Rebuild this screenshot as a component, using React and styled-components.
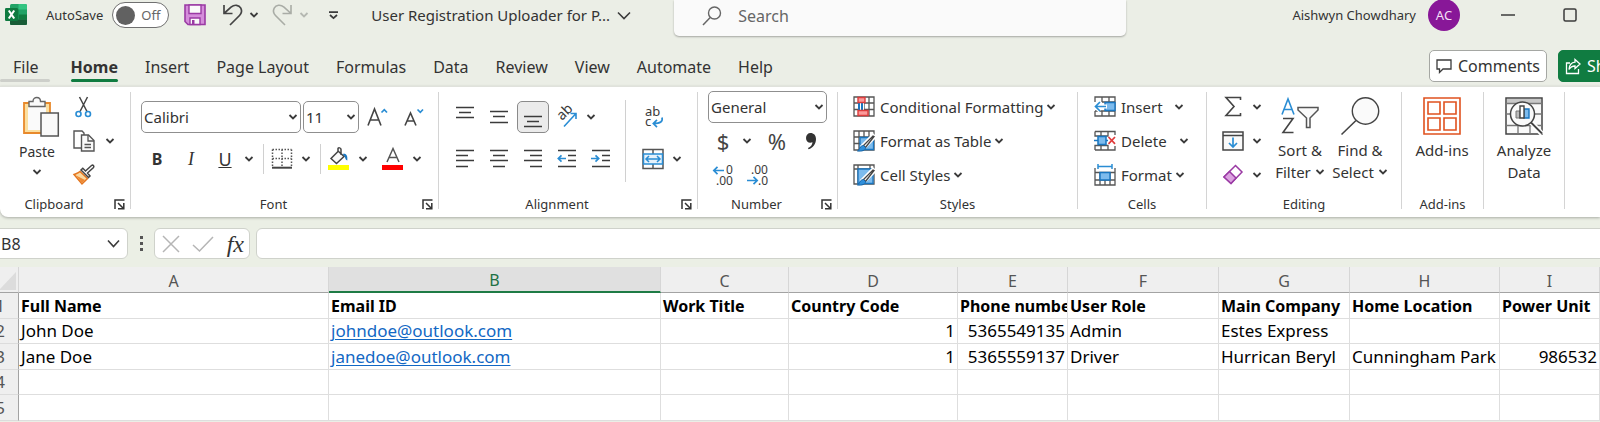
import React from "react";
import styled, { createGlobalStyle, css } from "styled-components";

const UI = '"Noto Sans", "Open Sans", sans-serif';
const INK = "#3b3b3b";
const BLUE = "#2a8dd4";
const GREEN = "#107c41";

const GlobalStyle = createGlobalStyle`
  *, *::before, *::after { box-sizing: border-box; }
  body {
    margin: 0;
    background: #ebeee6;
    color: #333;
    font-family: ${UI};
    overflow: hidden;
  }
  button, input, select { font: inherit; color: inherit; margin: 0; }
  svg { overflow: visible; }
`;

const buttonReset = css`
  border: 0;
  padding: 0;
  background: transparent;
  white-space: nowrap;
  cursor: pointer;
`;

/* ---------- title bar ---------- */

const TitleBar = styled.header`
  display: flex;
  align-items: flex-start;
  height: 50px;
  padding: 0 23px 0 5px;
`;

const TitleItem = styled.div`
  display: flex;
  align-items: center;
  flex: none;
  height: 30px;
  margin-left: ${(p) => p.$gap || 0}px;
  font-size: 13px;
  white-space: nowrap;
`;

const TitleButton = styled.button`
  ${buttonReset}
  display: flex;
  align-items: center;
  flex: none;
  height: 30px;
  margin-left: ${(p) => p.$gap || 0}px;
  font-size: 15px;
`;

const Toggle = styled.button`
  ${buttonReset}
  display: flex;
  align-items: center;
  gap: 6px;
  width: 57px;
  height: 26px;
  margin-left: 9px;
  padding-left: 3px;
  border: 1px solid #707070;
  border-radius: 13px;
  background: #fff;
  color: #666;
  font-size: 13px;
  &::before {
    content: "";
    width: 19px;
    height: 19px;
    border-radius: 50%;
    background: #616161;
  }
`;

const SearchBox = styled.label`
  display: flex;
  align-items: center;
  flex: 0 1 452px;
  height: 36px;
  margin-left: 43px;
  padding: 0 26px 5px 28px;
  gap: 16px;
  border-radius: 0 0 5px 5px;
  background: #fafafa;
  box-shadow: 0 1px 2px rgba(0, 0, 0, 0.3);
`;

const SearchInput = styled.input`
  flex: 1;
  min-width: 0;
  border: 0;
  padding: 0;
  outline: 0;
  background: transparent;
  font-size: 16px;
  &::placeholder { color: #666; opacity: 1; }
`;

const Account = styled.div`
  display: flex;
  align-items: center;
  height: 30px;
  margin-left: auto;
  font-size: 13px;
  white-space: nowrap;
`;

const Avatar = styled.span`
  display: grid;
  place-items: center;
  width: 32px;
  height: 32px;
  margin: 0 41px 0 12px;
  border-radius: 50%;
  background: #881798;
  color: #f3dff6;
  font-size: 13px;
`;

/* ---------- tabs ---------- */

const TabBar = styled.div`
  display: flex;
  align-items: flex-start;
  height: 36px;
  overflow: hidden;
`;

const Tabs = styled.nav`
  display: flex;
  gap: 27px;
  padding-left: 13px;
`;

const Tab = styled.button`
  ${buttonReset}
  position: relative;
  height: 34px;
  color: #333;
  font-size: 16px;
  font-weight: ${(p) => (p.$active ? 700 : 400)};
  margin-right: ${(p) => (p.$hovered ? 5 : 0)}px;
  &::after {
    content: "";
    position: absolute;
    bottom: 2px;
    left: ${(p) => (p.$hovered ? -13 : 0)}px;
    right: ${(p) => (p.$hovered ? -11 : 0)}px;
    height: 3px;
    border-radius: 2px;
    background: ${(p) => (p.$active ? GREEN : p.$hovered ? "#cdcfca" : "transparent")};
  }
`;

const ActionButton = styled.button`
  ${buttonReset}
  display: flex;
  align-items: center;
  flex: none;
  gap: 6px;
  height: 32px;
  padding: 0 6px;
  border: 1px solid ${(p) => (p.$primary ? GREEN : "#a5a7a3")};
  border-radius: 5px;
  background: ${(p) => (p.$primary ? GREEN : "#fff")};
  color: ${(p) => (p.$primary ? "#fff" : "#333")};
  font-size: 16px;
`;

const Comments = styled(ActionButton)`
  margin-left: auto;
  margin-right: 11px;
`;

const Share = styled(ActionButton)`
  width: 100px;
  margin-right: -58px;
`;

/* ---------- ribbon ---------- */

const Ribbon = styled.section`
  position: relative;
  display: flex;
  height: 131px;
  padding: 5px 0 8px;
  border-top: 1px solid #e0e2dc;
  border-radius: 0 0 0 8px;
  background: #fff;
  box-shadow: 0 1px 3px rgba(0, 0, 0, 0.28);
`;

const GroupBox = styled.div`
  display: flex;
  flex-direction: column;
  flex: 0 0 ${(p) => p.$width}px;
  border-right: 1px solid #d4d4d4;
`;

const GroupBody = styled.div`
  display: flex;
  flex: 1;
  padding-left: ${(p) => p.$pad || 0}px;
`;

const GroupFooter = styled.div`
  display: flex;
  align-items: center;
  height: 12px;
  padding-top: 2px;
  font-size: 13px;
  line-height: 12px;
`;

const GroupLabel = styled.span`
  flex: 1;
  text-align: center;
`;

const Launcher = styled.button`
  ${buttonReset}
  display: flex;
  width: 22px;
  padding-left: 6px;
`;

const Stack = styled.div`
  display: flex;
  flex-direction: column;
  gap: ${(p) => (p.$two ? 12 : 4)}px;
  padding-top: ${(p) => (p.$two ? 10 : 0)}px;
`;

const Row = styled.div`
  display: flex;
  align-items: center;
  height: 30px;
  gap: ${(p) => p.$gap || 0}px;
  padding-left: ${(p) => p.$pad || 0}px;
`;

const Tool = styled.button`
  ${buttonReset}
  display: grid;
  place-items: center;
  flex: none;
  width: 34px;
  height: 30px;
  font-size: ${(p) => (p.$bold ? 16 : 18)}px;
  line-height: 30px;
  font-family: ${(p) => (p.$serif ? '"Liberation Serif", serif' : "inherit")};
  font-style: ${(p) => (p.$serif ? "italic" : "normal")};
  font-weight: ${(p) => (p.$bold ? 700 : 400)};
`;

const PressedTool = styled(Tool)`
  width: 32px;
  height: 32px;
  margin: 0 1px;
  border: 1px solid #8a8a8a;
  border-radius: 5px;
  background: #ebebeb;
`;

const ClipboardTool = styled(Tool)`
  width: 26px;
  margin: 0 6px 0 -3px;
`;

const NumberTool = styled(Tool)`
  font-size: 22px;
  color: #444;
`;

const ArrowButton = styled.button`
  ${buttonReset}
  display: grid;
  place-items: center;
  flex: none;
  width: 14px;
  height: 30px;
  margin-right: 2px;
`;

const Split = styled.div`
  display: flex;
  flex: none;
  margin-right: 4px;
`;

const Rule = styled.span`
  width: 1px;
  height: 30px;
  margin: 0 1px;
  background: #d0d0d0;
`;

const TallRule = styled.span`
  width: 1px;
  height: 82px;
  margin: 8px 10px 0 7px;
  background: #d0d0d0;
`;

const SelectBox = styled.span`
  display: flex;
  align-items: center;
  flex: none;
  width: ${(p) => p.$width}px;
  height: 32px;
  padding-right: 2px;
  border: 1px solid #8f8f8f;
  border-radius: 5px;
  background: #fff;
`;

const Select = styled.select`
  appearance: none;
  flex: 1;
  min-width: 0;
  height: 30px;
  border: 0;
  padding: 0 0 0 2px;
  outline: 0;
  background: transparent;
  color: #333;
  font-size: 15px;
`;

const BigButton = styled.button`
  ${buttonReset}
  display: flex;
  flex-direction: column;
  align-items: center;
  width: ${(p) => p.$width}px;
  padding-top: 5px;
  font-size: ${(p) => p.$size || 15}px;
  line-height: 22px;
  svg:first-child { margin-bottom: 4px; }
`;

const BigLine = styled.span`
  display: flex;
  align-items: center;
  gap: 4px;
  min-height: 18px;
  && svg { margin: 0; }
`;

const Command = styled.button`
  ${buttonReset}
  display: flex;
  align-items: center;
  height: 30px;
  gap: 3px;
  font-size: 15px;
`;

const CommandText = styled.span`
  min-width: ${(p) => p.$width || 0}px;
  margin-left: 2px;
  text-align: left;
`;

/* ---------- formula bar ---------- */

const FormulaBar = styled.div`
  display: flex;
  align-items: center;
  height: 50px;
  overflow: hidden;
  padding-top: 3px;
  background: #ebefe5;
`;

const BarBox = styled.div`
  display: flex;
  align-items: center;
  flex: none;
  height: 31px;
  border: 1px solid #cfd2cb;
  border-radius: 6px;
  background: #fff;
`;

const NameBox = styled(BarBox)`
  width: 136px;
  margin-left: -8px;
  padding: 0 7px 0 8px;
`;

const NameInput = styled.input`
  flex: 1;
  min-width: 0;
  border: 0;
  padding: 0;
  outline: 0;
  background: transparent;
  font-size: 16px;
`;

const FormulaTools = styled(BarBox)`
  width: 96px;
  margin: 0 6px 0 11px;
  padding: 0 5px 0 7px;
  justify-content: space-between;
`;

const BarButton = styled.button`
  ${buttonReset}
  display: flex;
`;

const FunctionButton = styled(BarButton)`
  font-family: "Liberation Serif", serif;
  font-style: italic;
  font-size: 24px;
  line-height: 26px;
`;

const DragDots = styled.span`
  display: flex;
  flex-direction: column;
  gap: 3px;
  margin-left: 12px;
  i { width: 3px; height: 3px; background: #555; }
`;

const FormulaInput = styled.input`
  flex: 1;
  min-width: 0;
  height: 31px;
  margin-right: -6px;
  padding: 0 8px;
  border: 1px solid #cfd2cb;
  border-radius: 6px;
  background: #fff;
`;

/* ---------- sheet ---------- */

const SheetArea = styled.main`
  overflow: hidden;
  background: #fff;
`;

const Sheet = styled.table`
  width: calc(100% + 18px);
  margin-left: -18px;
  table-layout: fixed;
  border-collapse: separate;
  border-spacing: 0;
  font-size: 17px;
  line-height: 22px;
  color: #000;
`;

const ColumnHead = styled.th`
  height: 26px;
  padding: 2px 0 0;
  border-right: 1px solid #d6d6d6;
  border-bottom: ${(p) => (p.$active ? "2px solid #1e7b45" : "1px solid #a3a3a3")};
  background: ${(p) => (p.$active ? "#e0e0e0" : "#efefef")};
  color: ${(p) => (p.$active ? "#1e7145" : "#555")};
  font-size: 16px;
  font-weight: 400;
`;

const Corner = styled(ColumnHead)`
  svg { display: block; margin: 0 2px 0 auto; }
`;

const SheetRow = styled.tr`
  height: 25px;
  &:nth-child(odd) { height: 26px; }
`;

const RowHead = styled.th`
  padding: 0;
  border-right: 1px solid #a3a3a3;
  border-bottom: 1px solid #dcdcdc;
  background: #efefef;
  color: #555;
  font-weight: 400;
`;

const Cell = styled.td`
  padding: 0 2px;
  border-right: 1px solid #dedede;
  border-bottom: 1px solid #dedede;
  overflow: hidden;
  white-space: nowrap;
  text-align: ${(p) => (p.$number ? "right" : "left")};
  font-size: ${(p) => (p.$bold ? 16 : 17)}px;
  font-weight: ${(p) => (p.$bold ? 700 : 400)};
  a { color: #1268c4; text-underline-offset: 2px; }
`;

/* ---------- icons ---------- */

const Svg = ({ w = 22, h = 22, children, ...rest }) => (
  <svg width={w} height={h} viewBox={`0 0 ${w} ${h}`} fill="none" aria-hidden="true" {...rest}>
    {children}
  </svg>
);

const Chevron = ({ color = INK }) => (
  <Svg w={10} h={6}>
    <path d="M1.5 1 5 4.5 8.5 1" stroke={color} strokeWidth="1.8" />
  </Svg>
);

const WideChevron = ({ w = 14 }) => (
  <Svg w={w} h={9}>
    <path d={`M1 1.5 ${w / 2} 7.5 ${w - 1} 1.5`} stroke={INK} strokeWidth="1.6" />
  </Svg>
);

const ExcelLogo = () => (
  <Svg>
    <rect x="5" y="0" width="17" height="21" rx="1.5" fill="#21a366" />
    <path d="M13.5 0H20.5A1.5 1.5 0 0 1 22 1.5V5.5H13.5Z" fill="#33c481" />
    <path d="M5 5.5H13.5V10.5H5Z" fill="#107c41" />
    <path d="M13.5 10.5H22V15.5H13.5Z" fill="#107c41" />
    <path d="M5 15.5H22V19.5A1.5 1.5 0 0 1 20.5 21H6.5A1.5 1.5 0 0 1 5 19.5Z" fill="#185c37" />
    <rect x="0" y="4" width="13" height="13" rx="1.2" fill="#0f7a40" />
    <path d="M3.8 6.5 9.2 14.5M9.2 6.5 3.8 14.5" stroke="#fff" strokeWidth="2.1" />
  </Svg>
);

const SaveIcon = () => (
  <Svg>
    <path d="M1 1H21V20.5H4L1 17.5Z" fill="#d58ddb" stroke="#9a3aa4" strokeWidth="1.6" />
    <path d="M5 1H17V9.5H5Z" fill="#fafafa" stroke="#9a3aa4" strokeWidth="1.4" />
    <path d="M6 14H16V20.5H6Z" fill="#fafafa" stroke="#9a3aa4" strokeWidth="1.4" />
    <path d="M8 16V20.5H10.5V16Z" fill="#9a3aa4" />
  </Svg>
);

const UndoIcon = () => (
  <Svg>
    <path d="M2 1V9.5H10.5M2 9.5 9 3.2C12.5 .2 17 .8 18.8 4.2C20.2 7 19.5 9.5 17.5 11.5L8 21" stroke="#444" strokeWidth="1.7" />
  </Svg>
);

const RedoIcon = () => (
  <Svg>
    <path d="M20 1V9.5H11.5M20 9.5 13 3.2C9.5 .2 5 .8 3.2 4.2C1.8 7 2.5 9.5 4.5 11.5L14 21" stroke="#a9aca6" strokeWidth="1.6" />
  </Svg>
);

const CustomizeIcon = () => (
  <Svg w={11} h={9}>
    <path d="M1 1.2H10M2 4 5.5 7.2 9 4" stroke={INK} strokeWidth="1.7" />
  </Svg>
);

const SearchIcon = () => (
  <Svg w={20} h={20}>
    <circle cx="12.5" cy="7" r="6" stroke="#666" strokeWidth="1.4" />
    <path d="M8.2 11.5 1 19" stroke="#666" strokeWidth="1.5" />
  </Svg>
);

const CommentIcon = () => (
  <Svg w={16} h={16}>
    <path d="M1 2H15V11H7L3.5 14.5V11H1Z" stroke={INK} strokeWidth="1.3" />
  </Svg>
);

const ShareIcon = () => (
  <Svg w={16} h={17}>
    <path d="M5 5H1.5V15.5H13.5V11M10 1.5 15 6 10 10.5V8C7 8 5.5 9 4 11.5C4.3 7 6.5 4.5 10 4.2Z" stroke="#fff" strokeWidth="1.3" />
  </Svg>
);

const LauncherIcon = () => (
  <Svg w={11} h={11}>
    <path d="M1 10V1H10.5M4 4 9 9M9.8 4V9.8H4" stroke="#333" strokeWidth="1.5" />
  </Svg>
);

const PasteIcon = () => (
  <Svg w={44} h={40}>
    <path d="M9 6H35V36H9Z" fill="#fbdfa0" stroke="#e8892b" strokeWidth="1.8" />
    <path d="M13 10H31V33H13Z" fill="#fafafa" />
    <path d="M14 9.5V4.5H18C18 -.8 25.5 -.8 25.5 4.5H30V9.5Z" fill="#fafafa" stroke="#666" strokeWidth="1.4" />
    <path d="M26 16H43.3V39H26Z" fill="#fafafa" stroke="#555" strokeWidth="1.5" />
  </Svg>
);

const CutIcon = () => (
  <Svg>
    <path d="M6.5 1 14 15.5M14.5 1 7 15.5" stroke="#444" strokeWidth="1.5" />
    <circle cx="5.5" cy="18" r="2.5" stroke={BLUE} strokeWidth="1.6" />
    <circle cx="15" cy="18" r="2.5" stroke={BLUE} strokeWidth="1.6" />
  </Svg>
);

const CopyIcon = () => (
  <Svg>
    <path d="M8 18H1V1H9L11 3V5" stroke="#555" strokeWidth="1.4" />
    <path d="M8.5 5H15.5L21 10.5V21H8.5Z" fill="#fafafa" stroke="#555" strokeWidth="1.4" />
    <path d="M15 5V11H21M11.5 14.5H18M11.5 17.5H18" stroke="#555" strokeWidth="1.3" />
  </Svg>
);

const PainterIcon = () => (
  <Svg>
    <path d="M7 7.5C5 9.5 3 9.5 1 10.5L9 20L14.5 14.5Z" fill="#fbd9a0" stroke="#e3751f" strokeWidth="1.5" />
    <path d="M3 11.5 9 19 12 16Z" fill="#ee8a35" />
    <path d="M8 6 15.5 13.5 17 12 14.5 9 20.5 3.5C21.5 2 20 .5 18.5 1.5L12.5 7L9.8 4.3Z" fill="#fff" stroke="#444" strokeWidth="1.5" />
  </Svg>
);

const GrowFont = ({ small }) => (
  <Svg w={24} h={24}>
    {small ? (
      <path d="M3 20.5 8.5 8 14 20.5M5 16H12" stroke="#444" strokeWidth="1.6" />
    ) : (
      <path d="M2 20.5 8.5 4 15 20.5M4.3 15H12.7" stroke="#444" strokeWidth="1.6" />
    )}
    <path d={small ? "M15.5 4.5 18.3 7.3 21 4.5" : "M15.5 7.5 18.3 4.7 21 7.5"} stroke={BLUE} strokeWidth="1.7" />
  </Svg>
);

const BordersIcon = () => (
  <Svg>
    <path d="M1.5 1.5H20.5M1.5 10.5H20.5M1.5 1.5V18M11 1.5V18M20.5 1.5V18" stroke="#555" strokeWidth="1.5" strokeDasharray="1.5 1.5" />
    <path d="M1 19.7H21" stroke="#444" strokeWidth="2" />
  </Svg>
);

const FillIcon = () => (
  <Svg w={22} h={24}>
    <path d="M10 4.5 3 11.5 8.5 16.5 16 9.5 10 4V1.5C10 .5 13 .5 13 2.5V8" fill="#fafafa" stroke="#444" strokeWidth="1.5" />
    <path d="M14.5 7C18 6 19.8 8 19.3 13.5C16.5 12.5 18 9.5 14.5 7Z" fill="#1976c0" />
    <path d="M0 18H21V23H0Z" fill="#ffff00" />
  </Svg>
);

const FontColorIcon = () => (
  <Svg w={22} h={24}>
    <path d="M5 15 11 1.5 17 15M7 10.5H15" stroke="#555" strokeWidth="1.5" />
    <path d="M0 18H21V23H0Z" fill="#ff0000" />
  </Svg>
);

const Lines = ({ rows }) => (
  <Svg w={20} h={20}>
    {rows.map(([y, a, b]) => (
      <path key={y} d={`M${a} ${y}.5H${b}`} stroke={INK} strokeWidth="1.5" />
    ))}
  </Svg>
);

const Indent = ({ out }) => (
  <Svg w={20} h={20}>
    <path d="M1 1.5H19M11 6.5H19M11 11.5H19M1 17.5H19" stroke={INK} strokeWidth="1.5" />
    <path d={out ? "M9 9.5H1.5M4.5 6.3 1.3 9.5 4.5 12.7" : "M0 9.5H7.5M4.5 6.3 7.7 9.5 4.5 12.7"} stroke={BLUE} strokeWidth="1.7" />
  </Svg>
);

const OrientationIcon = () => (
  <Svg w={24} h={24}>
    <text transform="translate(7 16) rotate(-45)" fontSize="14" fill={INK}>ab</text>
    <path d="M9 21.5 21 8.5M15.5 8.5H21V14" stroke={BLUE} strokeWidth="1.6" />
  </Svg>
);

const WrapIcon = () => (
  <Svg w={22} h={24}>
    <text x="3" y="11" fontSize="13" fill={INK}>ab</text>
    <text x="3" y="21" fontSize="13" fill={INK}>c</text>
    <path d="M20 12.5C21 16.5 18.5 18.5 11.5 18.5M15 14.8 11.3 18.5 15 22.2" stroke={BLUE} strokeWidth="1.7" />
  </Svg>
);

const MergeIcon = () => (
  <Svg w={22} h={22}>
    <path d="M1 1.5H21V20.5H1ZM11 1.5V6M11 16V20.5" stroke="#555" strokeWidth="1.5" />
    <path d="M1.5 6H20.5V16H1.5Z" fill="#e6f2fb" stroke={BLUE} strokeWidth="1.5" />
    <path d="M4 11H18M7 8 4 11 7 14M15 8 18 11 15 14" stroke={BLUE} strokeWidth="1.5" />
  </Svg>
);

const CommaIcon = () => (
  <Svg w={14} h={20}>
    <path d="M6.5 2C9.7 2 12 4.3 12 8C12 13 9 17 4.5 18.3L4 17C6.7 16 8.3 13.8 8.5 11.3C5 12.8 2 10.5 2 7C2 4 4 2 6.5 2Z" fill="#333" />
  </Svg>
);

const DecimalIcon = ({ less }) => (
  <Svg w={24} h={24}>
    <text x={less ? 6 : 15} y="11" fontSize="12" fill={INK}>{less ? ".00" : "0"}</text>
    <text x={less ? 13 : 5} y="22" fontSize="12" fill={INK}>{less ? ".0" : ".00"}</text>
    <path
      d={less ? "M2 17.5H12M8.5 13.8 12.2 17.5 8.5 21.2" : "M13 7.5H3M6.5 3.8 2.8 7.5 6.5 11.2"}
      stroke={BLUE}
      strokeWidth="1.7"
    />
  </Svg>
);

const GRID = "M1 1H21V20H1ZM1 7H21M1 13.5H21M6 1V20M16 1V20M11 1V20";

const ConditionalIcon = () => (
  <Svg>
    <path d={GRID} stroke="#555" strokeWidth="1.3" />
    <path d="M5 7H11V14H5Z" fill="#fff" />
    <path d="M6 7V14M9 7V14" stroke="#1976c0" strokeWidth="2" />
    <path d="M5 1.5H12V6.5H5ZM5 14.5H15V19.5H5Z" fill="#fb9a9a" stroke="#dc3c3c" strokeWidth="1.4" />
  </Svg>
);

const BrushIcon = ({ solid }) => (
  <Svg>
    <path d={solid ? "M1 1H21V20H1ZM1 5H21M5 1V20M17 1V5" : GRID} stroke="#555" strokeWidth="1.3" />
    <path d={solid ? "M5 5H20V19.5H5Z" : "M7 7.5H20.5V19.5H7Z"} fill="#7dbbed" stroke="#1976c0" strokeWidth="1.3" />
    <path d="M22 5 9 18" stroke="#fff" strokeWidth="6" />
    <path d="M21 6.5 12.5 17.5 10.5 15.5 20 6Z" fill="#fafafa" stroke="#444" strokeWidth="1.3" />
    <path d="M10.5 15.5 12.7 17.7C12 20.5 9 21.5 4.5 21C7 19.5 6.5 15.8 10.5 15.5Z" fill="#2f8fdb" stroke="#1565a8" strokeWidth="1" />
  </Svg>
);

const InsertCellsIcon = () => (
  <Svg>
    <path d="M5 1H21V20H1V15M1 6V1H5M8 1V6M15 1V20M1 15H21M8 15V20M21 6H8" stroke="#555" strokeWidth="1.3" />
    <path d="M11 6.5H21V14.5H11Z" fill="#7dbbed" stroke="#1976c0" strokeWidth="1.4" />
    <path d="M13 10.5H1.5M6 6 1.5 10.5 6 15" stroke="#fff" strokeWidth="4" />
    <path d="M12 10.5H1.5M6 6 1.5 10.5 6 15" stroke={BLUE} strokeWidth="1.7" />
  </Svg>
);

const DeleteCellsIcon = () => (
  <Svg>
    <path d="M1 1.5H21V5M1 1.5V6H14V1.5M7 1.5V6M1 20V15.5H14V20M1 20H21V16M7 15.5V20" stroke="#555" strokeWidth="1.3" />
    <path d="M0 10.5H4M4 6.5H12V14.5H4ZM12 10.5H14" fill="#7dbbed" stroke="#1976c0" strokeWidth="1.5" />
    <path d="M14.5 7 21 13.8M21 7 14.5 13.8" stroke="#e03b3b" strokeWidth="1.7" />
  </Svg>
);

const FormatCellsIcon = () => (
  <Svg>
    <path d="M1 4V21H21V4M1 8.5H21M1 16H21M6 8V21M16 8V21M11 16V21" stroke="#555" strokeWidth="1.3" />
    <path d="M6 8.5H16V16H6Z" fill="#7dbbed" stroke="#1976c0" strokeWidth="1.4" />
    <path d="M4 2.5H18M4 0V5M18 0V5" stroke={BLUE} strokeWidth="1.5" />
  </Svg>
);

const SigmaIcon = () => (
  <Svg>
    <path d="M18.5 4V1.5H4L12 10.5 4 19.5H18.5V17" stroke="#444" strokeWidth="1.6" />
  </Svg>
);

const FillDownIcon = () => (
  <Svg>
    <path d="M1 2H21V20H1ZM1 5.5H21" fill="#fafafa" stroke="#444" strokeWidth="1.5" />
    <path d="M11 7.5V17M7 13 11 17 15 13" stroke={BLUE} strokeWidth="1.7" />
  </Svg>
);

const EraserIcon = () => (
  <Svg>
    <path d="M13.5 1.5 20 8 9 19.5 2 13Z" fill="#fff" stroke="#9a3aa4" strokeWidth="1.5" />
    <path d="M7.5 7.5 14 14 9 19.5 2 13Z" fill="#dba2e0" stroke="#9a3aa4" strokeWidth="1.5" />
  </Svg>
);

const SortIcon = () => (
  <Svg w={38} h={38}>
    <path d="M1 17.5 7 2 13 17.5M3 12.5H11" stroke={BLUE} strokeWidth="1.6" />
    <path d="M2 21.5H12L2 35.5H12.5" stroke="#444" strokeWidth="1.6" />
    <path d="M17 10.5H37V13L29 21V30.5H25.5V21L17 13Z" fill="#fafafa" stroke="#555" strokeWidth="1.5" />
  </Svg>
);

const FindIcon = () => (
  <Svg w={40} h={38}>
    <circle cx="25.5" cy="14" r="13.2" fill="#fafafa" stroke="#444" strokeWidth="1.4" />
    <path d="M16 23.5 1.5 37.5" stroke="#444" strokeWidth="1.6" />
  </Svg>
);

const AddInsIcon = () => (
  <Svg w={38} h={38}>
    <path d="M1 1H37V37H1Z" stroke="#e0521f" strokeWidth="1.6" />
    <path d="M5 5H17V17H5ZM21 5H33V17H21ZM5 21H17V33H5ZM21 21H33V33H21Z" stroke="#e0521f" strokeWidth="1.6" />
  </Svg>
);

const AnalyzeIcon = () => (
  <Svg w={38} h={38}>
    <path d="M1 1H37V37H1Z" fill="#fafafa" stroke="#444" strokeWidth="1.5" />
    <path d="M2 2H36V6H2Z" fill="#c8c8c8" />
    <path d="M1 6.5H37M1 17H7M28 17H37M1 28.5H37M13 28V37M25 28V37" stroke="#777" strokeWidth="1.3" />
    <path d="M25 24 37 37" stroke="#fff" strokeWidth="5" />
    <circle cx="17.5" cy="17" r="12" fill="#fafafa" stroke="#444" strokeWidth="1.5" />
    <path d="M26 25.5 37 36.5" stroke="#444" strokeWidth="1.8" />
    <path d="M11 14H15V21H11Z" fill="#bbb" stroke="#777" />
    <path d="M19 12H24V21H19Z" fill="#7dbbed" stroke="#1976c0" strokeWidth="1.4" />
    <path d="M15 9H19V21H15Z" fill="#fff" stroke="#444" strokeWidth="1.4" />
  </Svg>
);

/* ---------- composed parts ---------- */

const Arrow = ({ label }) => (
  <ArrowButton aria-label={label}>
    <Chevron />
  </ArrowButton>
);

const Group = ({ width, label, launcher, pad, children }) => (
  <GroupBox $width={width}>
    <GroupBody $pad={pad}>{children}</GroupBody>
    <GroupFooter>
      <GroupLabel>{label}</GroupLabel>
      {launcher && (
        <Launcher aria-label={`${label} settings`}>
          <LauncherIcon />
        </Launcher>
      )}
    </GroupFooter>
  </GroupBox>
);

const Dropdown = ({ label, width, value }) => (
  <SelectBox $width={width}>
    <Select aria-label={label} defaultValue={value}>
      <option>{value}</option>
    </Select>
    <Chevron />
  </SelectBox>
);

const TABS = ["File", "Home", "Insert", "Page Layout", "Formulas", "Data", "Review", "View", "Automate", "Help"];

const COLUMNS = [
  ["A", 310],
  ["B", 332],
  ["C", 128],
  ["D", 169],
  ["E", 110],
  ["F", 151],
  ["G", 131],
  ["H", 150],
  ["I", null],
];

const ROWS = [
  ["Full Name", "Email ID", "Work Title", "Country Code", "Phone number", "User Role", "Main Company", "Home Location", "Power Unit"],
  ["John Doe", "johndoe@outlook.com", "", 1, 5365549135, "Admin", "Estes Express", "", ""],
  ["Jane Doe", "janedoe@outlook.com", "", 1, 5365559137, "Driver", "Hurrican Beryl", "Cunningham Park", 986532],
  ["", "", "", "", "", "", "", "", ""],
  ["", "", "", "", "", "", "", "", ""],
];

export default function App() {
  return (
    <>
      <GlobalStyle />
      <TitleBar>
        <TitleItem><ExcelLogo /></TitleItem>
        <TitleItem $gap={19}>
          <span id="autosave">AutoSave</span>
          <Toggle role="switch" aria-checked="false" aria-labelledby="autosave">Off</Toggle>
        </TitleItem>
        <TitleButton $gap={15} aria-label="Save"><SaveIcon /></TitleButton>
        <TitleButton $gap={16} aria-label="Undo"><UndoIcon /></TitleButton>
        <TitleButton $gap={5} aria-label="Undo history"><Chevron /></TitleButton>
        <TitleButton $gap={12} aria-label="Redo"><RedoIcon /></TitleButton>
        <TitleButton $gap={6} aria-label="Redo history"><Chevron color="#b5b8b2" /></TitleButton>
        <TitleButton $gap={19} aria-label="Customize toolbar"><CustomizeIcon /></TitleButton>
        <TitleButton $gap={32}>User Registration Uploader for P...</TitleButton>
        <TitleButton $gap={7} aria-label="File details"><WideChevron /></TitleButton>
        <SearchBox>
          <SearchIcon />
          <SearchInput type="search" placeholder="Search" aria-label="Search" />
        </SearchBox>
        <Account>
          Aishwyn Chowdhary
          <Avatar>AC</Avatar>
          <TitleButton aria-label="Minimize">
            <Svg w={14} h={14}><path d="M0 7H14" stroke={INK} strokeWidth="1.5" /></Svg>
          </TitleButton>
          <TitleButton $gap={48} aria-label="Maximize">
            <Svg w={14} h={14}><rect x="1" y="1" width="12" height="12" rx="1.5" stroke={INK} strokeWidth="1.5" /></Svg>
          </TitleButton>
        </Account>
      </TitleBar>

      <TabBar>
        <Tabs aria-label="Ribbon tabs">
          {TABS.map((name) => (
            <Tab key={name} $active={name === "Home"} $hovered={name === "File"}>{name}</Tab>
          ))}
        </Tabs>
        <Comments><CommentIcon />Comments</Comments>
        <Share $primary><ShareIcon />Share</Share>
      </TabBar>

      <Ribbon aria-label="Home ribbon">
        <Group width={131} label="Clipboard" launcher>
          <BigButton $width={74} $size={14}>
            <PasteIcon />
            <BigLine>Paste</BigLine>
            <BigLine><Chevron /></BigLine>
          </BigButton>
          <Stack>
            <Row><ClipboardTool aria-label="Cut"><CutIcon /></ClipboardTool></Row>
            <Row>
              <ClipboardTool aria-label="Copy"><CopyIcon /></ClipboardTool>
              <Arrow label="Copy options" />
            </Row>
            <Row><ClipboardTool aria-label="Format painter"><PainterIcon /></ClipboardTool></Row>
          </Stack>
        </Group>

        <Group width={308} label="Font" launcher>
          <Stack $two>
            <Row $pad={10} $gap={2}>
              <Dropdown label="Font name" width={160} value="Calibri" />
              <Dropdown label="Font size" width={56} value="11" />
              <Tool aria-label="Increase font size"><GrowFont /></Tool>
              <Tool aria-label="Decrease font size"><GrowFont small /></Tool>
            </Row>
            <Row $pad={9}>
              <Tool $bold>B</Tool>
              <Tool $serif>I</Tool>
              <Split><Tool><u>U</u></Tool><Arrow label="Underline options" /></Split>
              <Rule />
              <Split><Tool aria-label="Borders"><BordersIcon /></Tool><Arrow label="Border options" /></Split>
              <Rule />
              <Split><Tool aria-label="Fill color"><FillIcon /></Tool><Arrow label="Fill color options" /></Split>
              <Tool aria-label="Font color"><FontColorIcon /></Tool>
              <Arrow label="Font color options" />
            </Row>
          </Stack>
        </Group>

        <Group width={259} label="Alignment" launcher pad={9}>
          <Stack $two>
            <Row>
              <Tool aria-label="Top align"><Lines rows={[[0, 1, 19], [5, 4, 16], [10, 1, 19]]} /></Tool>
              <Tool aria-label="Middle align"><Lines rows={[[4, 1, 19], [9, 4, 16], [15, 1, 19]]} /></Tool>
              <PressedTool aria-label="Bottom align" aria-pressed="true"><Lines rows={[[9, 1, 19], [14, 4, 16], [19, 1, 19]]} /></PressedTool>
              <Tool aria-label="Orientation"><OrientationIcon /></Tool>
              <Arrow label="Orientation options" />
            </Row>
            <Row>
              <Tool aria-label="Align left"><Lines rows={[[1, 1, 19], [6, 1, 13], [11, 1, 19], [17, 1, 13]]} /></Tool>
              <Tool aria-label="Center"><Lines rows={[[1, 1, 19], [6, 4, 16], [11, 1, 19], [17, 4, 16]]} /></Tool>
              <Tool aria-label="Align right"><Lines rows={[[1, 1, 19], [6, 7, 19], [11, 1, 19], [17, 7, 19]]} /></Tool>
              <Tool aria-label="Decrease indent"><Indent out /></Tool>
              <Tool aria-label="Increase indent"><Indent /></Tool>
            </Row>
          </Stack>
          <TallRule />
          <Stack $two>
            <Row><Tool aria-label="Wrap text"><WrapIcon /></Tool></Row>
            <Row><Tool aria-label="Merge and center"><MergeIcon /></Tool><Arrow label="Merge options" /></Row>
          </Stack>
        </Group>

        <Group width={140} label="Number" launcher pad={8}>
          <Stack>
            <Row $pad={2}><Dropdown label="Number format" width={119} value="General" /></Row>
            <Row>
              <Split><NumberTool>$</NumberTool><Arrow label="Currency options" /></Split>
              <NumberTool>%</NumberTool>
              <Tool aria-label="Comma style"><CommaIcon /></Tool>
            </Row>
            <Row>
              <Tool aria-label="Increase decimal"><DecimalIcon /></Tool>
              <Tool aria-label="Decrease decimal"><DecimalIcon less /></Tool>
            </Row>
          </Stack>
        </Group>

        <Group width={240} label="Styles" pad={15}>
          <Stack>
            <Command><ConditionalIcon /><CommandText>Conditional Formatting</CommandText><Chevron /></Command>
            <Command><BrushIcon /><CommandText>Format as Table</CommandText><Chevron /></Command>
            <Command><BrushIcon solid /><CommandText>Cell Styles</CommandText><Chevron /></Command>
          </Stack>
        </Group>

        <Group width={129} label="Cells" pad={16}>
          <Stack>
            <Command><InsertCellsIcon /><CommandText $width={50}>Insert</CommandText><Chevron /></Command>
            <Command><DeleteCellsIcon /><CommandText $width={55}>Delete</CommandText><Chevron /></Command>
            <Command><FormatCellsIcon /><CommandText $width={50}>Format</CommandText><Chevron /></Command>
          </Stack>
        </Group>

        <Group width={195} label="Editing" pad={9}>
          <Stack>
            <Split><Tool aria-label="AutoSum"><SigmaIcon /></Tool><Arrow label="AutoSum options" /></Split>
            <Split><Tool aria-label="Fill"><FillDownIcon /></Tool><Arrow label="Fill options" /></Split>
            <Split><Tool aria-label="Clear"><EraserIcon /></Tool><Arrow label="Clear options" /></Split>
          </Stack>
          <BigButton $width={60}>
            <SortIcon />
            <BigLine>Sort &amp;</BigLine>
            <BigLine>Filter <Chevron /></BigLine>
          </BigButton>
          <BigButton $width={60}>
            <FindIcon />
            <BigLine>Find &amp;</BigLine>
            <BigLine>Select <Chevron /></BigLine>
          </BigButton>
        </Group>

        <Group width={82} label="Add-ins">
          <BigButton $width={80}>
            <AddInsIcon />
            <BigLine>Add-ins</BigLine>
          </BigButton>
        </Group>

        <Group width={81}>
          <BigButton $width={80}>
            <AnalyzeIcon />
            <BigLine>Analyze</BigLine>
            <BigLine>Data</BigLine>
          </BigButton>
        </Group>
      </Ribbon>

      <FormulaBar>
        <NameBox>
          <NameInput aria-label="Name box" defaultValue="B8" />
          <WideChevron w={13} />
        </NameBox>
        <DragDots><i /><i /><i /></DragDots>
        <FormulaTools>
          <BarButton aria-label="Cancel">
            <Svg w={18} h={18}><path d="M1 1 17 17M17 1 1 17" stroke="#b5b5b5" strokeWidth="1.5" /></Svg>
          </BarButton>
          <BarButton aria-label="Enter">
            <Svg w={22} h={18}><path d="M1 10 7.5 16 21 2" stroke="#b5b5b5" strokeWidth="1.5" /></Svg>
          </BarButton>
          <FunctionButton>fx</FunctionButton>
        </FormulaTools>
        <FormulaInput aria-label="Formula" />
      </FormulaBar>

      <SheetArea>
        <Sheet>
          <colgroup>
            <col width={37} />
            {COLUMNS.map(([name, width]) => <col key={name} width={width || undefined} />)}
          </colgroup>
          <thead>
            <tr>
              <Corner aria-label="Select all">
                <Svg w={17} h={18}><path d="M17 0V18H0Z" fill="#dcdcdc" /></Svg>
              </Corner>
              {COLUMNS.map(([name]) => <ColumnHead key={name} scope="col" $active={name === "B"}>{name}</ColumnHead>)}
            </tr>
          </thead>
          <tbody>
            {ROWS.map((row, r) => (
              <SheetRow key={r}>
                <RowHead scope="row">{r + 1}</RowHead>
                {row.map((value, c) => (
                  <Cell key={c} $bold={r === 0} $number={typeof value === "number"}>
                    {String(value).includes("@") ? <a href={`mailto:${value}`}>{value}</a> : value}
                  </Cell>
                ))}
              </SheetRow>
            ))}
          </tbody>
        </Sheet>
      </SheetArea>
    </>
  );
}
